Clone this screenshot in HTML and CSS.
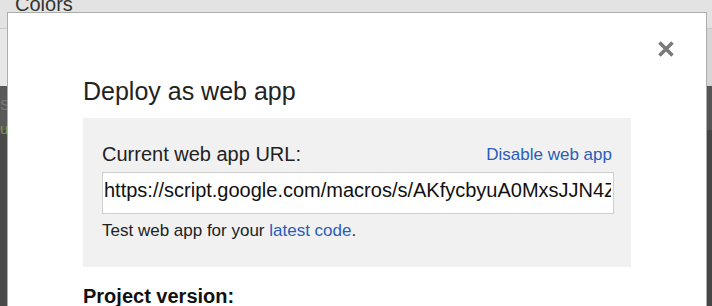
FILE: index.html
```html
<!DOCTYPE html>
<html>
<head>
<meta charset="utf-8">
<link rel="stylesheet" href="styles.css">
</head>
<body>
<div class="app">
  <div class="menubar"><span class="menu-item">Colors</span></div>
  <div class="toolbar"><div class="toolbar-side"></div></div>
  <div class="editor">
    <div class="gutter">
      <span class="code-a">S</span>
      <span class="code-b">u</span>
    </div>
    <div class="editor-side"></div>
  </div>
</div>

<div class="dialog">
  <button class="close" aria-label="Close">
    <svg width="18" height="18" viewBox="0 0 18 18"><path d="M2.5 2.5 L15.5 15.5 M15.5 2.5 L2.5 15.5" stroke="#7a7a7a" stroke-width="3.6" stroke-linecap="butt" fill="none"/></svg>
  </button>
  <h1 class="title">Deploy as web app</h1>
  <div class="panel">
    <div class="panel-head">
      <span class="label">Current web app URL:</span>
      <a class="link" href="#">Disable web app</a>
    </div>
    <input class="url" type="text" readonly value="https://script.google.com/macros/s/AKfycbyuA0MxsJJN4Zx7Vq2LmR8pT3kWnE5hYcD9uFgB1sQ/exec">
    <p class="hint">Test web app for your <a class="link" href="#">latest code</a>.</p>
  </div>
  <h2 class="section">Project version:</h2>
</div>
</body>
</html>
```
FILE: styles.css
```css
* { box-sizing: border-box; }
html, body { margin: 0; padding: 0; }
body {
  width: 712px;
  height: 306px;
  overflow: hidden;
  position: relative;
  background: #454545;
  font-family: Arial, "Liberation Sans", sans-serif;
}
.app {
  display: flex;
  flex-direction: column;
  height: 306px;
}
.menubar {
  height: 28px;
  background: #e3e3e3;
  padding-left: 15px;
  overflow: hidden;
}
.menu-item {
  display: block;
  font-size: 20px;
  line-height: 24px;
  margin-top: -8px;
  color: #333;
}
.toolbar {
  height: 58px;
  background: #e7e7e7;
  border-top: 1px solid #c9c9c9;
  display: flex;
  justify-content: flex-end;
}
.toolbar-side {
  width: 8px;
  background: #d6d6d6;
}
.editor {
  flex: 1;
  display: flex;
  justify-content: space-between;
  background: #454545;
}
.gutter {
  width: 7px;
  background: linear-gradient(#595959 0, #595959 44px, #4a4a4a 44px);
  display: flex;
  flex-direction: column;
  overflow: hidden;
  font-size: 15px;
  line-height: 24px;
}
.code-a { color: #7a7a7a; margin-top: 7px; }
.code-b { color: #7d9a52; }
.editor-side {
  width: 6px;
  background: linear-gradient(#555 0, #555 44px, #464646 44px);
}

.dialog {
  position: absolute;
  left: 7px;
  top: 12px;
  width: 700px;
  height: 320px;
  background: #fff;
  border: 1px solid #acacac;
  padding: 63px 75px 0;
  color: #222;
}
.close {
  position: absolute;
  top: 27px;
  right: 31px;
  width: 18px;
  height: 18px;
  padding: 0;
  border: 0;
  background: none;
  display: block;
}
.close svg { display: block; }
.title {
  margin: 0 0 12px;
  font-size: 25px;
  line-height: 30px;
  font-weight: normal;
  color: #222;
}
.panel {
  background: #f1f1f1;
  padding: 24px 17px 26px 19px;
}
.panel-head {
  display: flex;
  justify-content: space-between;
  align-items: baseline;
}
.label {
  font-size: 20px;
  line-height: 24px;
  color: #222;
}
.panel-head .link {
  font-size: 17px;
  position: relative;
  top: -1px;
  margin-right: 2px;
}
.link {
  color: #2a5db8;
  text-decoration: none;
}
.url {
  display: block;
  width: 100%;
  height: 42px;
  margin-top: 6px;
  border: 1px solid #cfcfcf;
  background: #fff;
  padding: 0 2px 5px 1px;
  font-family: Arial, "Liberation Sans", sans-serif;
  font-size: 20px;
  color: #111;
  outline: none;
}
.hint {
  margin: 7px 0 0;
  font-size: 17px;
  line-height: 20px;
  color: #222;
}
.section {
  margin: 17px 0 0;
  font-size: 20px;
  line-height: 24px;
  font-weight: bold;
  color: #111;
}
```
